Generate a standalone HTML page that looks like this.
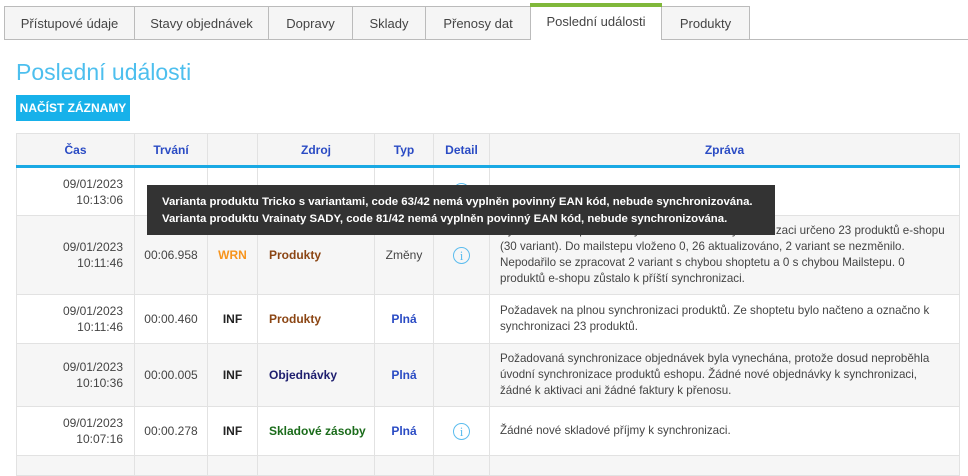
<!DOCTYPE html>
<html><head><meta charset="utf-8"><style>
*{box-sizing:border-box;margin:0;padding:0}
body{width:968px;height:461px;overflow:hidden;background:#fff;font-family:"Liberation Sans",sans-serif;color:#444;position:relative}
.tabs{position:absolute;left:4px;top:6px;height:34px;display:flex}
.tab{height:34px;border:1px solid #bbb;border-left:none;background:#f5f5f5;font-size:13px;color:#444;display:flex;align-items:center;justify-content:center}
.tab:first-child{border-left:1px solid #bbb}
.tab.act{background:#fff;border-bottom:none;border-top:none;position:relative;top:-3px;height:37px;border-left:1px solid #bbb;margin-left:-1px}
.tab.act:before{content:"";position:absolute;left:-1px;right:-1px;top:0;height:4px;background:#80b83a}
.line{position:absolute;left:4px;right:0;top:39px;height:1px;background:#bbb}
h1{position:absolute;left:16px;top:59px;font-size:23px;font-weight:normal;color:#4dbfee}
.btn{position:absolute;left:16px;top:95px;width:114px;height:26px;background:#17b1ea;color:#fff;font-size:12px;font-weight:bold;display:flex;align-items:center;justify-content:center}
table{position:absolute;left:16px;top:133px;width:944px;border-collapse:collapse;table-layout:fixed;font-size:12px}
td,th{border:1px solid #e2e2e2;vertical-align:middle}
th{height:33px;background:#f5f5f5;color:#2a4bc4;font-size:12px;border-bottom:3px solid #1aa9e4}
tr.g td{background:#f6f6f6}
.t{text-align:right;padding-right:11px;line-height:16px;color:#444}
.d{text-align:center;color:#444}
.c{text-align:center;font-weight:bold}
.s{padding-left:11px;font-weight:bold}
.m{padding:0 8px 0 10px;line-height:16px;color:#444;font-size:11.6px}
.i{display:inline-block;width:17px;height:17px;border:1.3px solid #5bbcee;border-radius:50%;color:#5bbcee;font-size:13px;line-height:15px;text-align:center;font-family:"Liberation Serif",serif}
.tip{position:absolute;left:147px;top:185px;width:628px;height:50px;background:#333;color:#fff;font-size:11.4px;font-weight:bold;padding:9px 0 0 15px;line-height:17px;white-space:nowrap}
</style></head><body>
<div class="line"></div>
<div class="tabs">
<div class="tab" style="width:131px">Přístupové údaje</div>
<div class="tab" style="width:134px">Stavy objednávek</div>
<div class="tab" style="width:84px">Dopravy</div>
<div class="tab" style="width:73px">Sklady</div>
<div class="tab" style="width:105px">Přenosy dat</div>
<div class="tab act" style="width:132px">Poslední události</div>
<div class="tab" style="width:88px">Produkty</div>
</div>
<h1>Poslední události</h1>
<div class="btn">NAČÍST ZÁZNAMY</div>
<table>
<colgroup><col style="width:118px"><col style="width:73px"><col style="width:50px"><col style="width:117px"><col style="width:59px"><col style="width:56px"><col></colgroup>
<tr><th>Čas</th><th>Trvání</th><th></th><th>Zdroj</th><th>Typ</th><th>Detail</th><th>Zpráva</th></tr>
<tr style="height:49px"><td class="t">09/01/2023<br>10:13:06</td><td></td><td class="c" style="color:#f7941d">WRN</td><td></td><td></td><td class="d"><span class="i">i</span></td><td></td></tr>
<tr class="g" style="height:79px"><td class="t">09/01/2023<br>10:11:46</td><td class="d">00:06.958</td><td class="c" style="color:#f7941d">WRN</td><td class="s" style="color:#8b4513">Produkty</td><td class="d">Změny</td><td class="d"><span class="i">i</span></td><td class="m">Synchronizace produktů byla dokončena. K synchronizaci určeno 23 produktů e-shopu (30 variant). Do mailstepu vloženo 0, 26 aktualizováno, 2 variant se nezměnilo. Nepodařilo se zpracovat 2 variant s chybou shoptetu a 0 s chybou Mailstepu. 0 produktů e-shopu zůstalo k příští synchronizaci.</td></tr>
<tr style="height:49px"><td class="t">09/01/2023<br>10:11:46</td><td class="d">00:00.460</td><td class="c" style="color:#222">INF</td><td class="s" style="color:#8b4513">Produkty</td><td class="c" style="color:#2a4bc4">Plná</td><td></td><td class="m">Požadavek na plnou synchronizaci produktů. Ze shoptetu bylo načteno a označno k synchronizaci 23 produktů.</td></tr>
<tr class="g" style="height:63px"><td class="t">09/01/2023<br>10:10:36</td><td class="d">00:00.005</td><td class="c" style="color:#222">INF</td><td class="s" style="color:#1e1e6e">Objednávky</td><td class="c" style="color:#2a4bc4">Plná</td><td></td><td class="m">Požadovaná synchronizace objednávek byla vynechána, protože dosud neproběhla úvodní synchronizace produktů eshopu. Žádné nové objednávky k synchronizaci, žádné k aktivaci ani žádné faktury k přenosu.</td></tr>
<tr style="height:49px"><td class="t">09/01/2023<br>10:07:16</td><td class="d">00:00.278</td><td class="c" style="color:#222">INF</td><td class="s" style="color:#1a6b1a">Skladové zásoby</td><td class="c" style="color:#2a4bc4">Plná</td><td class="d"><span class="i">i</span></td><td class="m">Žádné nové skladové příjmy k synchronizaci.</td></tr>
<tr class="g" style="height:20px"><td></td><td></td><td></td><td></td><td></td><td></td><td></td></tr>
</table>
<div class="tip">Varianta produktu Tricko s variantami, code 63/42 nemá vyplněn povinný EAN kód, nebude synchronizována.<br>Varianta produktu Vrainaty SADY, code 81/42 nemá vyplněn povinný EAN kód, nebude synchronizována.</div>
</body></html>
